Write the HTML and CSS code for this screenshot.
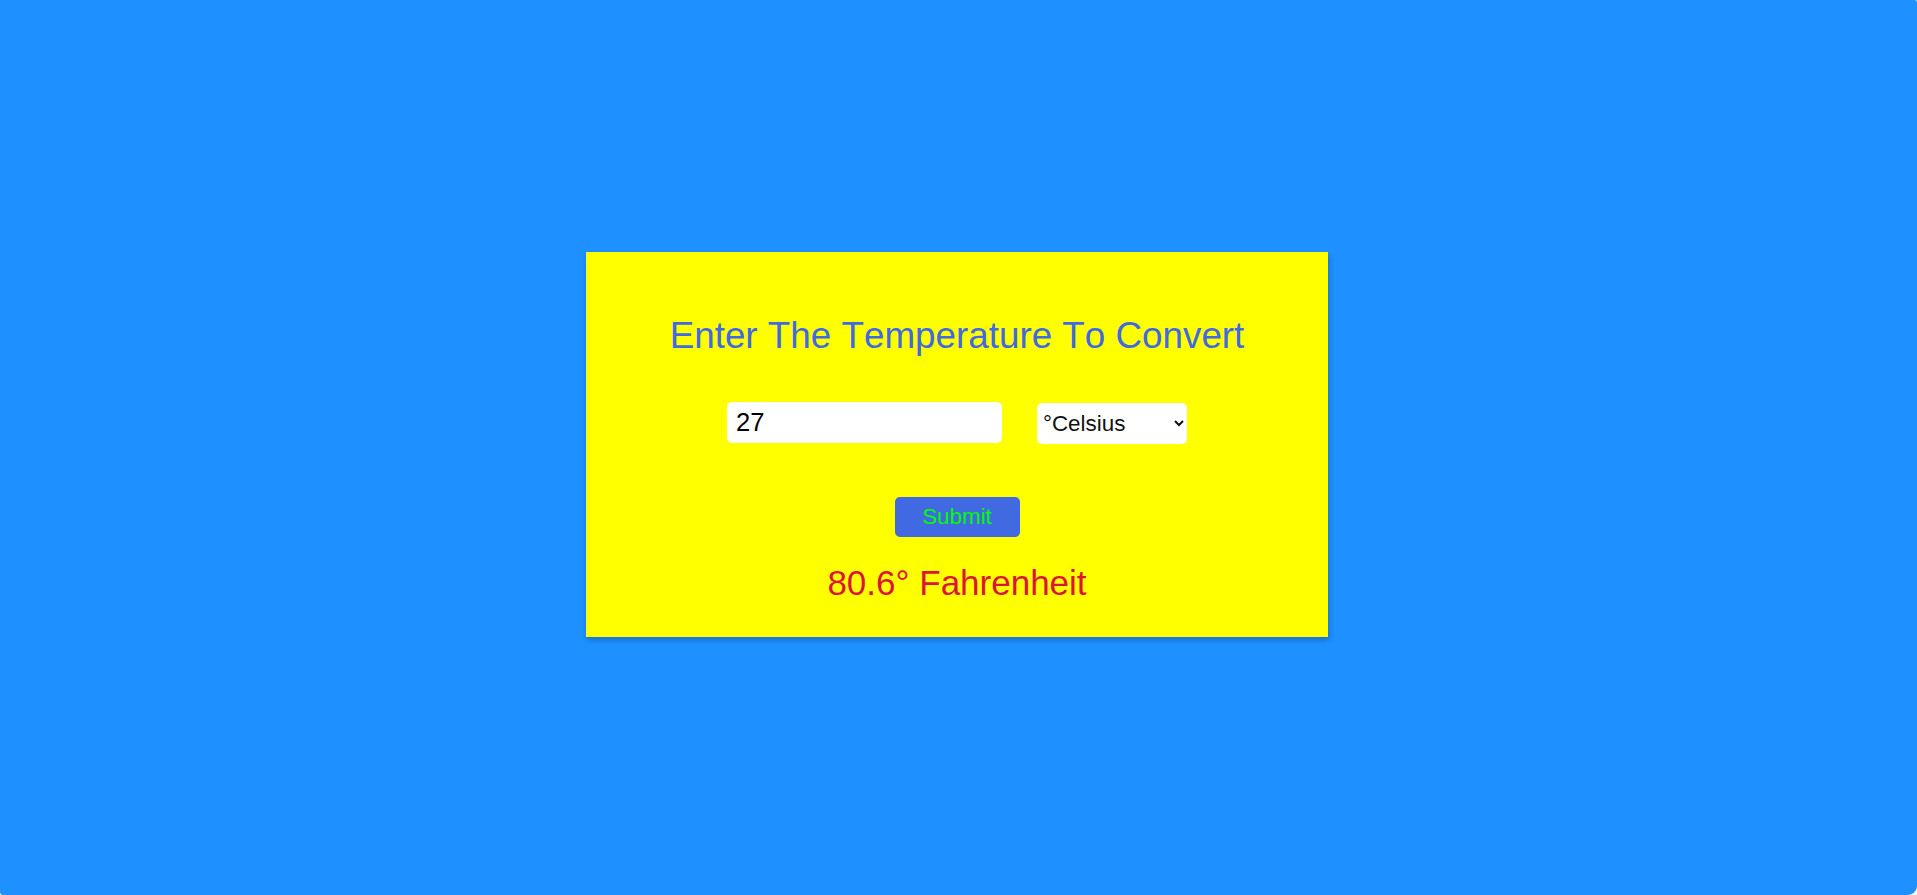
FILE: index.html
```html
<!DOCTYPE html>
<html lang="en">
<head>
<meta charset="utf-8">
<title>Temperature Converter</title>
<link rel="stylesheet" href="styles.css">
</head>
<body>
<div class="page">
  <div class="card">
    <h1 class="title">Enter The Temperature To Convert</h1>
    <div class="row">
      <input class="temp-input" type="text" value="27">
      <select class="unit-select">
        <option>°Celsius</option>
        <option>°Fahrenheit</option>
      </select>
    </div>
    <button class="submit-btn" type="button">Submit</button>
    <p class="result">80.6° Fahrenheit</p>
  </div>
</div>
</body>
</html>
```
FILE: styles.css
```css
html, body {
  margin: 0;
  padding: 0;
  height: 100%;
  background: #ffffff;
}
body {
  font-family: "Liberation Sans", Arial, sans-serif;
  font-kerning: none;
}
.page {
  height: 100%;
  background: #1e90ff;
  border-radius: 0 2px 9px 3px;
  display: flex;
  align-items: center;
  justify-content: center;
}
.card {
  width: 742px;
  height: 385px;
  box-sizing: border-box;
  background: #ffff00;
  box-shadow: 1px 3px 5px rgba(0, 0, 0, 0.22);
  display: flex;
  flex-direction: column;
  align-items: center;
  padding-top: 63px;
  margin-top: -6px;
  margin-right: 3px;
}
.title {
  margin: 0;
  font-size: 36.8px;
  font-weight: normal;
  line-height: normal;
  color: #4169e1;
}
.row {
  display: flex;
  align-items: flex-start;
  gap: 35px;
  margin-top: 45px;
}
.temp-input {
  width: 275px;
  height: 41px;
  box-sizing: border-box;
  border: none;
  border-radius: 5px;
  background: #ffffff;
  padding: 0 9px;
  font-family: "Liberation Sans", Arial, sans-serif;
  font-kerning: none;
  font-size: 25.6px;
  color: #000000;
  outline: none;
}
.unit-select {
  width: 150px;
  height: 41px;
  margin-top: 1px;
  box-sizing: border-box;
  border: none;
  border-radius: 5px;
  background-color: #ffffff;
  padding: 0 2px;
  font-family: "Liberation Sans", Arial, sans-serif;
  font-kerning: none;
  font-size: 22.4px;
  color: #111111;
}
.submit-btn {
  margin-top: 53px;
  width: 125px;
  height: 40px;
  border: none;
  border-radius: 5px;
  background: #4169e1;
  color: #00ff00;
  font-family: "Liberation Sans", Arial, sans-serif;
  font-kerning: none;
  font-size: 22.4px;
  padding: 0;
}
.result {
  margin: 26px 0 0;
  font-size: 35px;
  line-height: normal;
  color: #dc143c;
}
```
